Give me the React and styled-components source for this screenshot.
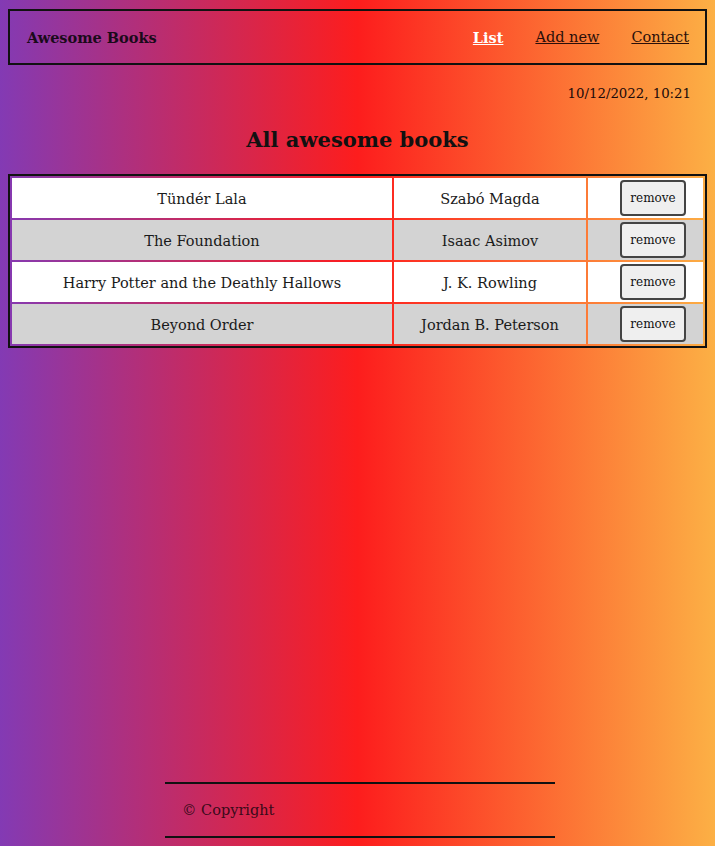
import React from 'react';
import styled, { createGlobalStyle } from 'styled-components';

const books = [
  { title: 'Tündér Lala', author: 'Szabó Magda' },
  { title: 'The Foundation', author: 'Isaac Asimov' },
  { title: 'Harry Potter and the Deathly Hallows', author: 'J. K. Rowling' },
  { title: 'Beyond Order', author: 'Jordan B. Peterson' },
];

const App = () => {
  return (
    <>
      <GlobalStyle />
      <Page>
        <Header>
          <Logo>Awesome Books</Logo>
          <Nav>
            <NavLink href="#" active>List</NavLink>
            <NavLink href="#">Add new</NavLink>
            <NavLink href="#">Contact</NavLink>
          </Nav>
        </Header>
        <DateText>10/12/2022, 10:21</DateText>
        <Title>All awesome books</Title>
        <BookTable>
          <tbody>
            {books.map((book, i) => (
              <Row key={book.title} odd={i % 2 === 1}>
                <TitleCell>{book.title}</TitleCell>
                <AuthorCell>{book.author}</AuthorCell>
                <ActionCell>
                  <RemoveButton>remove</RemoveButton>
                </ActionCell>
              </Row>
            ))}
          </tbody>
        </BookTable>
        <Footer>© Copyright</Footer>
      </Page>
    </>
  );
};

export default App;

const GlobalStyle = createGlobalStyle`
  html {
    min-height: 100%;
  }
  body {
    margin: 8px;
    min-height: calc(100vh - 16px);
    font-family: "DejaVu Serif", serif;
    color: #111;
    background: linear-gradient(90deg, #833ab4, #fd1d1d, #fcb045);
  }
`;

const Page = styled.div`
  min-height: calc(100vh - 16px);
  display: flex;
  flex-direction: column;
`;

const Header = styled.header`
  margin-top: 1px;
  height: 52px;
  border: 2px solid #111;
  display: flex;
  align-items: center;
  justify-content: space-between;
  padding: 0 16px 0 17px;
`;

const Logo = styled.h1`
  margin: 0;
  font-size: 14.5px;
  font-weight: 700;
  color: #1a0a1a;
`;

const Nav = styled.nav`
  display: flex;
  gap: 32px;
`;

const NavLink = styled.a`
  font-size: 14.5px;
  color: ${(p) => (p.active ? '#fff' : '#2a0f0a')};
  font-weight: ${(p) => (p.active ? 700 : 400)};
  text-decoration: underline;
`;

const DateText = styled.p`
  margin: 21px 16px 0 0;
  text-align: right;
  font-size: 13.3px;
  color: #1a0a0a;
`;

const Title = styled.h2`
  margin: 26px 0 22px;
  text-align: center;
  font-size: 21px;
  font-weight: 700;
  color: #111;
`;

const BookTable = styled.table`
  width: 100%;
  border: 2px solid #111;
  border-spacing: 2px;
  box-sizing: border-box;
`;

const Row = styled.tr`
  background: ${(p) => (p.odd ? '#d3d3d3' : '#fff')};
`;

const Cell = styled.td`
  height: 38px;
  padding: 2px 0 0;
  text-align: center;
  font-size: 14.5px;
  color: #1a1a1a;
`;

const TitleCell = styled(Cell)``;

const AuthorCell = styled(Cell)`
  width: 192px;
`;

const ActionCell = styled(Cell)`
  width: 115px;
  height: 40px;
  text-align: right;
  padding: 0 17px 0 0;
  box-sizing: border-box;
`;

const RemoveButton = styled.button`
  width: 66px;
  height: 36px;
  padding: 0;
  background: #efefef;
  border: 2px solid #444;
  border-radius: 4px;
  font-family: "DejaVu Serif", serif;
  font-size: 12px;
  color: #111;
  vertical-align: middle;
  cursor: pointer;
`;

const Footer = styled.footer`
  margin: auto 0 0 157px;
  width: 390px;
  height: 56px;
  border-top: 2px solid #111;
  border-bottom: 2px solid #111;
  display: flex;
  align-items: center;
  padding-left: 17px;
  box-sizing: border-box;
  font-size: 14.5px;
  color: #3a0a1a;
`;
